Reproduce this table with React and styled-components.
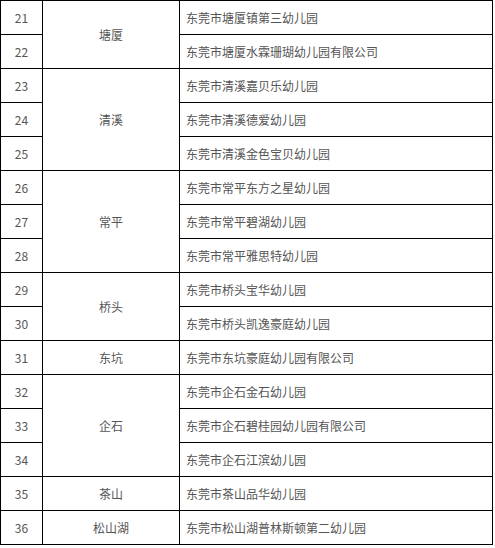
import React from 'react';
import styled, { createGlobalStyle } from 'styled-components';

const GlobalStyle = createGlobalStyle`
  body {
    margin: 0;
    background: #fff;
    font-family: "Noto Sans CJK SC", "Noto Sans", sans-serif;
  }
`;

const Table = styled.table`
  border-collapse: collapse;
  table-layout: fixed;
  width: 492px;
  margin: 0;
  color: #555;
  font-size: 12px;
`;

const Col = styled.col`
  width: ${props => props.$w}px;
`;

const Cell = styled.td`
  border: 1px solid #000;
  height: 34px;
  padding: 0 ${props => (props.$left ? '6px' : '0')};
  text-align: ${props => (props.$left ? 'left' : 'center')};
  vertical-align: middle;
  line-height: 16px;
  white-space: nowrap;
  box-sizing: border-box;
`;

const groups = [
  { town: '塘厦', items: ['东莞市塘厦镇第三幼儿园', '东莞市塘厦水霖珊瑚幼儿园有限公司'] },
  { town: '清溪', items: ['东莞市清溪嘉贝乐幼儿园', '东莞市清溪德爱幼儿园', '东莞市清溪金色宝贝幼儿园'] },
  { town: '常平', items: ['东莞市常平东方之星幼儿园', '东莞市常平碧湖幼儿园', '东莞市常平雅思特幼儿园'] },
  { town: '桥头', items: ['东莞市桥头宝华幼儿园', '东莞市桥头凯逸豪庭幼儿园'] },
  { town: '东坑', items: ['东莞市东坑豪庭幼儿园有限公司'] },
  { town: '企石', items: ['东莞市企石金石幼儿园', '东莞市企石碧桂园幼儿园有限公司', '东莞市企石江滨幼儿园'] },
  { town: '茶山', items: ['东莞市茶山品华幼儿园'] },
  { town: '松山湖', items: ['东莞市松山湖普林斯顿第二幼儿园'] },
];

export default function App() {
  let num = 21;
  const rows = [];
  groups.forEach(g => {
    g.items.forEach((name, i) => {
      rows.push(
        <tr key={num}>
          <Cell>{num}</Cell>
          {i === 0 && <Cell rowSpan={g.items.length}>{g.town}</Cell>}
          <Cell $left>{name}</Cell>
        </tr>
      );
      num += 1;
    });
  });

  return (
    <>
      <GlobalStyle />
      <Table>
        <colgroup>
          <Col $w={42} />
          <Col $w={137} />
          <Col $w={313} />
        </colgroup>
        <tbody>{rows}</tbody>
      </Table>
    </>
  );
}
